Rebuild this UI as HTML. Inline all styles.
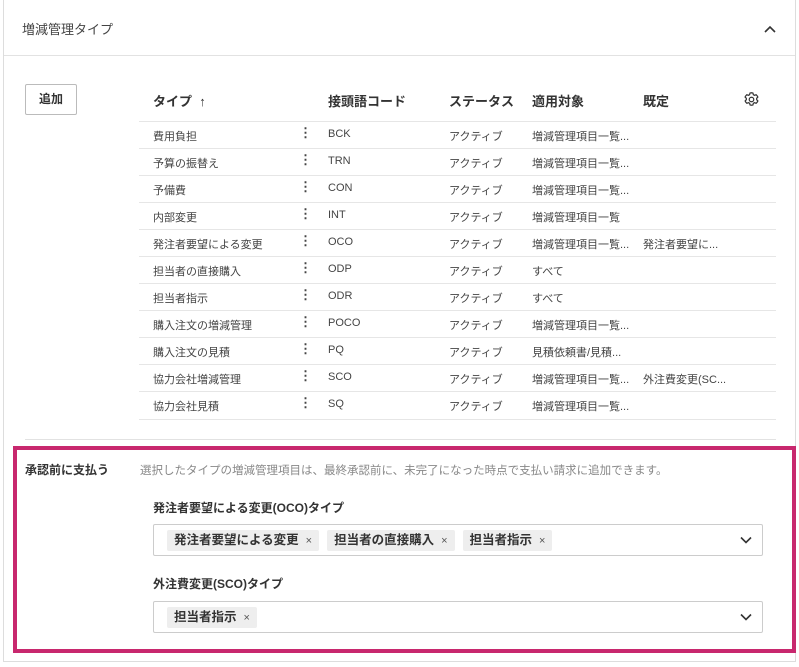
<!DOCTYPE html>
<html><head><meta charset="utf-8"><style>
body{margin:0;width:799px;height:667px;background:#fff;font-family:"Liberation Sans","Noto Sans CJK JP",sans-serif;color:#333;position:relative;overflow:hidden}
.card{position:absolute;left:3px;top:0;width:793px;height:662px;border:1px solid #ddd;border-top:none;box-sizing:border-box}
.title{position:absolute;left:22px;top:19px;font-size:13px;color:#444}
.hdiv{position:absolute;left:4px;right:4px;top:55px;border-top:1px solid #e2e2e2}
.chev{position:absolute;left:763px;top:24px}
.add{position:absolute;left:25px;top:84px;width:52px;height:31px;border:1px solid #bbb;box-sizing:border-box;font-size:12px;font-weight:bold;text-align:center;line-height:29px;border-radius:2px}
.th{position:absolute;top:91px;font-size:13px;font-weight:bold;color:#333}
.row{position:absolute;left:139px;width:637px;height:27px;border-top:1px solid #e6e6e6;font-size:11px;color:#444}
.row span{position:absolute;top:6px;white-space:nowrap}
.row span.d{font-weight:bold;font-size:13px;top:3px}
.pink{position:absolute;left:13px;top:446px;width:783px;height:207px;border:4px solid #c8286e;box-sizing:border-box}
.lbl{position:absolute;font-size:12px;font-weight:bold;color:#333}
.sel{position:absolute;left:153px;width:610px;height:32px;border:1px solid #ccc;box-sizing:border-box;border-radius:2px;display:flex;align-items:center;padding-left:13px;gap:8px}
.tag{height:21px;background:#eee;border-radius:2px;font-size:12.5px;font-weight:bold;line-height:21px;padding:0 7px;white-space:nowrap;color:#333}
.tag i{font-style:normal;font-weight:normal;font-size:11px;margin-left:7px;color:#555}
.sel svg{position:absolute;left:586px;top:11px}
</style></head><body>
<div class="card"></div>
<div class="title">増減管理タイプ</div>
<svg class="chev" width="14" height="10" viewBox="0 0 14 10"><path d="M2 8 L7 3 L12 8" fill="none" stroke="#333" stroke-width="1.6"/></svg>
<div class="hdiv"></div>
<div class="add">追加</div>
<div class="th" style="left:153px">タイプ&nbsp;&nbsp;↑</div>
<div class="th" style="left:328px">接頭語コード</div>
<div class="th" style="left:449px">ステータス</div>
<div class="th" style="left:532px">適用対象</div>
<div class="th" style="left:643px">既定</div>
<svg style="position:absolute;left:743px;top:91px" width="17" height="17" viewBox="0 0 24 24"><path d="M12 2.5l2 .3.6 2.4 1.6.9 2.3-.8 1.5 1.5 1 1.7-1.7 1.8v2l1.7 1.8-1 1.7-1.5 1.5-2.3-.8-1.6.9-.6 2.4-2 .3-2-.3-.6-2.4-1.6-.9-2.3.8-1.5-1.5-1-1.7 1.7-1.8v-2L2.9 8.5l1-1.7 1.5-1.5 2.3.8 1.6-.9.6-2.4z" fill="none" stroke="#333" stroke-width="1.7"/><circle cx="12" cy="12" r="3.2" fill="none" stroke="#333" stroke-width="1.7"/></svg>
<div class="row" style="top:121px"><span style="left:14px">費用負担</span><span class="d" style="left:160px">⋮</span><span style="left:189px">BCK</span><span style="left:310px">アクティブ</span><span style="left:393px">増減管理項目一覧...</span></div>
<div class="row" style="top:148px"><span style="left:14px">予算の振替え</span><span class="d" style="left:160px">⋮</span><span style="left:189px">TRN</span><span style="left:310px">アクティブ</span><span style="left:393px">増減管理項目一覧...</span></div>
<div class="row" style="top:175px"><span style="left:14px">予備費</span><span class="d" style="left:160px">⋮</span><span style="left:189px">CON</span><span style="left:310px">アクティブ</span><span style="left:393px">増減管理項目一覧...</span></div>
<div class="row" style="top:202px"><span style="left:14px">内部変更</span><span class="d" style="left:160px">⋮</span><span style="left:189px">INT</span><span style="left:310px">アクティブ</span><span style="left:393px">増減管理項目一覧</span></div>
<div class="row" style="top:229px"><span style="left:14px">発注者要望による変更</span><span class="d" style="left:160px">⋮</span><span style="left:189px">OCO</span><span style="left:310px">アクティブ</span><span style="left:393px">増減管理項目一覧...</span><span style="left:504px">発注者要望に...</span></div>
<div class="row" style="top:256px"><span style="left:14px">担当者の直接購入</span><span class="d" style="left:160px">⋮</span><span style="left:189px">ODP</span><span style="left:310px">アクティブ</span><span style="left:393px">すべて</span></div>
<div class="row" style="top:283px"><span style="left:14px">担当者指示</span><span class="d" style="left:160px">⋮</span><span style="left:189px">ODR</span><span style="left:310px">アクティブ</span><span style="left:393px">すべて</span></div>
<div class="row" style="top:310px"><span style="left:14px">購入注文の増減管理</span><span class="d" style="left:160px">⋮</span><span style="left:189px">POCO</span><span style="left:310px">アクティブ</span><span style="left:393px">増減管理項目一覧...</span></div>
<div class="row" style="top:337px"><span style="left:14px">購入注文の見積</span><span class="d" style="left:160px">⋮</span><span style="left:189px">PQ</span><span style="left:310px">アクティブ</span><span style="left:393px">見積依頼書/見積...</span></div>
<div class="row" style="top:364px"><span style="left:14px">協力会社増減管理</span><span class="d" style="left:160px">⋮</span><span style="left:189px">SCO</span><span style="left:310px">アクティブ</span><span style="left:393px">増減管理項目一覧...</span><span style="left:504px">外注費変更(SC...</span></div>
<div class="row" style="top:391px;border-bottom:1px solid #e6e6e6"><span style="left:14px">協力会社見積</span><span class="d" style="left:160px">⋮</span><span style="left:189px">SQ</span><span style="left:310px">アクティブ</span><span style="left:393px">増減管理項目一覧...</span></div>
<div style="position:absolute;left:25px;width:751px;top:439px;border-top:1px solid #e2e2e2"></div>
<div class="pink"></div>
<div class="lbl" style="left:25px;top:461px">承認前に支払う</div>
<div style="position:absolute;left:140px;top:462px;font-size:11.5px;color:#888">選択したタイプの増減管理項目は、最終承認前に、未完了になった時点で支払い請求に追加できます。</div>
<div class="lbl" style="left:153px;top:499px">発注者要望による変更(OCO)タイプ</div>
<div class="sel" style="top:524px"><div class="tag">発注者要望による変更<i>×</i></div><div class="tag">担当者の直接購入<i>×</i></div><div class="tag">担当者指示<i>×</i></div>
<svg width="12" height="8" viewBox="0 0 12 8"><path d="M1 1.5L6 6.5L11 1.5" fill="none" stroke="#333" stroke-width="1.6"/></svg></div>
<div class="lbl" style="left:153px;top:575px">外注費変更(SCO)タイプ</div>
<div class="sel" style="top:601px"><div class="tag">担当者指示<i>×</i></div>
<svg width="12" height="8" viewBox="0 0 12 8"><path d="M1 1.5L6 6.5L11 1.5" fill="none" stroke="#333" stroke-width="1.6"/></svg></div>
</body></html>
